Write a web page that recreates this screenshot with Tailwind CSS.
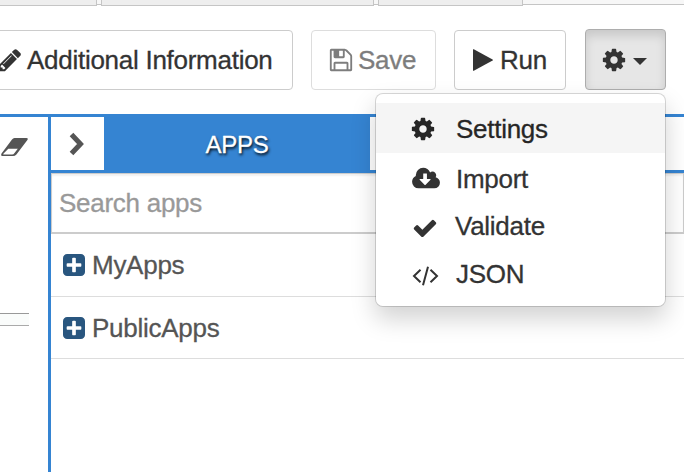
<!DOCTYPE html>
<html lang="en">
<head>
<meta charset="utf-8">
<title>Apps</title>
<script src="https://cdn.jsdelivr.net/npm/@tailwindcss/browser@4"></script>
</head>
<body class="relative h-[472px] w-[684px] overflow-hidden bg-white font-['Liberation_Sans',Arial,sans-serif] text-[26px] leading-[36px] tracking-[-0.27px] text-[#333] [-webkit-text-stroke:0.3px_currentColor]">
<svg class="hidden">
  <symbol id="cog" viewBox="0 0 1792 1792"><path d="M1152 896q0-106-75-181t-181-75-181 75-75 181 75 181 181 75 181-75 75-181zm512-109v222q0 12-8 23t-20 13l-185 28q-19 54-39 91 35 50 107 138 10 12 10 25t-9 23q-27 37-99 108t-94 71q-12 0-26-9l-138-108q-44 23-91 38-16 136-29 186-7 28-36 28h-222q-14 0-24.5-8.5t-11.5-21.5l-28-184q-49-16-90-37l-141 107q-10 9-25 9-14 0-25-11-126-114-165-168-7-10-7-23 0-12 8-23 15-21 51-66.5t54-70.5q-27-50-41-99l-183-27q-13-2-21-12.5t-8-23.5v-222q0-12 8-23t19-13l186-28q14-46 39-92-40-57-107-138-10-12-10-24 0-10 9-23 26-36 98.5-107.5t94.5-71.5q13 0 26 10l138 107q44-23 91-38 16-136 29-186 7-28 36-28h222q14 0 24.5 8.5t11.5 21.5l28 184q49 16 90 37l142-107q9-9 24-9 13 0 25 10 129 119 165 170 7 8 7 22 0 12-8 23-15 21-51 66.5t-54 70.5q26 50 41 98l183 28q13 2 21 12.5t8 23.5z"/></symbol>
  <symbol id="plus" viewBox="128 128 1536 1536"><path d="M1408 960v-128q0-26-19-45t-45-19h-320v-320q0-26-19-45t-45-19h-128q-26 0-45 19t-19 45v320h-320q-26 0-45 19t-19 45v128q0 26 19 45t45 19h320v320q0 26 19 45t45 19h128q26 0 45-19t19-45v-320h320q26 0 45-19t19-45zm256-544v960q0 119-84.5 203.5t-203.5 84.5h-960q-119 0-203.5-84.5t-84.5-203.5v-960q0-119 84.5-203.5t203.5-84.5h960q119 0 203.5 84.5t84.5 203.5z"/></symbol>
</svg>

<!-- Tab strip -->
<div class="flex h-[6px] items-start">
  <div class="h-[6px] w-[97px] border-r border-b border-[#c5c5c5] bg-[#eee]"></div>
  <div class="h-[5px] w-[4px] border-b border-[#c5c5c5] bg-[#f7f7f7]"></div>
  <div class="h-[6px] w-[273px] border-x border-b border-[#c5c5c5] bg-[#eee]"></div>
  <div class="h-[5px] w-[4px] border-b border-[#c5c5c5] bg-[#f7f7f7]"></div>
  <div class="h-[6px] w-[145px] border-x border-b border-[#c5c5c5] bg-[#eee]"></div>
  <div class="h-[5px] flex-1 border-b border-[#c5c5c5] bg-[#f7f7f7]"></div>
</div>

<!-- Toolbar -->
<div class="flex h-[108px] items-start pt-[23px]">
  <button class="mt-px -ml-[20px] flex h-[60px] w-[313px] items-center rounded-[4px] border border-[#ccc] bg-white pl-[16px]">
    <svg class="h-[26px] w-[26px] shrink-0" viewBox="0 0 1792 1792" fill="#333"><path d="M491 1536l91-91-235-235-91 91v107h128v128h107zm523-928q0-22-22-22-10 0-17 7l-542 542q-7 7-7 17 0 22 22 22 10 0 17-7l542-542q7-7 7-17zm-54-192l416 416-832 832h-416v-416zm683 96q0 53-37 90l-166 166-416-416 166-165q36-38 90-38 53 0 91 38l235 234q37 39 37 91z"/></svg>
    <span class="ml-[4px] whitespace-nowrap">Additional Information</span>
  </button>
  <button class="mt-px ml-[18px] flex h-[60px] w-[125px] items-center rounded-[4px] border border-[#ddd] bg-white pl-[16px] text-[#7d7d7d]">
    <svg class="h-[26px] w-[26px] shrink-0" viewBox="0 0 1792 1792" fill="#7d7d7d"><path d="M512 1536h768v-384h-768v384zm896 0h128v-896q0-14-10-38.5t-20-34.5l-281-281q-10-10-34-20t-39-10v416q0 40-28 68t-68 28h-576q-40 0-68-28t-28-68v-416h-128v1280h128v-416q0-40 28-68t68-28h832q40 0 68 28t28 68v416zm-384-928v-320q0-13-9.5-22.5t-22.5-9.5h-192q-13 0-22.5 9.5t-9.5 22.5v320q0 13 9.5 22.5t22.5 9.5h192q13 0 22.5-9.5t9.5-22.5zm640 32v928q0 40-28 68t-68 28h-1344q-40 0-68-28t-28-68v-1344q0-40 28-68t68-28h928q40 0 88 20t76 48l280 280q28 28 48 76t20 88z"/></svg>
    <span class="ml-[4px]">Save</span>
  </button>
  <button class="mt-px ml-[18px] flex h-[60px] w-[112px] items-center rounded-[4px] border border-[#ccc] bg-white pl-[18px]">
    <svg class="h-[22px] w-[20px] shrink-0" viewBox="0 0 20 22" fill="#333"><path d="M0 .5Q0 0 .8.3L19.6 10.5Q20.2 11 19.6 11.5L.8 21.7Q0 22 0 21.5Z"/></svg>
    <span class="ml-[7px]">Run</span>
  </button>
  <button class="ml-[19px] flex h-[61px] w-[81px] items-center rounded-[4px] border border-[#adadad] bg-[#e6e6e6] pl-[15px] shadow-[inset_0_6px_10px_rgba(0,0,0,0.125)]">
    <svg class="h-[26px] w-[26px] shrink-0" fill="#333"><use href="#cog"/></svg>
    <svg class="mt-[3px] ml-[6px] h-[7px] w-[14px]" viewBox="0 0 14 7" fill="#333"><path d="M0 0h14L7 7z"/></svg>
  </button>
</div>

<!-- Panels -->
<div class="flex h-[358px] border-t-[3px] border-[#3584d2]">
  <div class="flex w-[48px] flex-col items-start pt-[20px]">
    <svg class="h-[20px] w-[29px]" viewBox="0 0 29 20"><path d="M14.5 1H26.5Q28.5 1 27.4 3L16.4 17.5Q15 19 13 19H2Q.3 18.500 1.500 16.500L12 2.500Q13 1 14.500 1Z" fill="#555"/><path d="M8.300 11.700H17.800L14.500 16Q13.500 17.500 12 17.500H3.600Q2.600 17.500 3.600 16.500Z" fill="#fff"/></svg>
    <div class="mt-[156px] h-[13px] w-[29px] border-t border-b border-t-[#999] border-b-[#aaa] bg-[#fafcfb]"></div>
  </div>
  <div class="flex flex-1 flex-col border-l-[3px] border-[#3584d2]">
    <div class="flex h-[56px] shrink-0 border-b-[3px] border-[#3584d2] bg-[#3584d2]">
      <div class="flex w-[53px] items-center justify-center bg-white">
        <svg class="h-[24px] w-[20px]" viewBox="0 0 20 24" fill="none" stroke="#555" stroke-width="5"><path d="M3.500 2.500L12.500 12L3.500 21.500"/></svg>
      </div>
      <div class="w-[266px] pt-[10px] text-center text-[24px] text-white [text-shadow:1px_2px_3px_#000]">APPS</div>
      <div class="flex-1 bg-white"></div>
    </div>
    <div class="h-[61px] shrink-0 border border-b-2 border-[#ccc] pt-[11px] pl-[7px] text-[#999] shadow-[inset_0_2px_2px_rgba(0,0,0,0.06)]">Search apps</div>
    <div class="flex h-[63px] shrink-0 items-center border-b border-[#ddd] pl-[12px] text-[#555]">
      <svg class="h-[22px] w-[22px]" fill="#29567f"><use href="#plus"/></svg>
      <span class="ml-[7px]">MyApps</span>
    </div>
    <div class="flex h-[62px] shrink-0 items-center border-b border-[#ddd] pl-[12px] text-[#555]">
      <svg class="h-[22px] w-[22px]" fill="#29567f"><use href="#plus"/></svg>
      <span class="ml-[7px]">PublicApps</span>
    </div>
  </div>
</div>

<!-- Settings menu -->
<div class="absolute top-[93px] left-[375px] h-[214px] w-[291px] rounded-[8px] border border-black/15 bg-white bg-clip-padding pt-[9px] shadow-[0_12px_24px_rgba(0,0,0,0.175)]">
  <div class="flex h-[50px] items-center bg-[#f5f5f5] pt-[2px] pl-[34px] text-[#262626]">
    <svg class="h-[26px] w-[26px]" fill="#262626"><use href="#cog"/></svg>
    <span class="ml-[20px]">Settings</span>
  </div>
  <div class="flex h-[50px] items-center pt-[2px] pl-[36px]">
    <svg class="h-[26px] w-[28px]" viewBox="-64 0 1920 1792" fill="#333"><path d="M1216 928q0-14-9-23t-23-9h-224v-352q0-13-9.500-22.500t-22.500-9.500h-192q-13 0-22.500 9.500t-9.500 22.500v352h-224q-13 0-22.500 9.500t-9.500 22.500q0 14 9 23l352 352q9 9 23 9t23-9l351-351q10-12 10-24zm640 224q0 159-112.500 271.500t-271.500 112.500h-1088q-185 0-316.500-131.500t-131.500-316.500q0-130 70-240t188-165q-2-30-2-43 0-212 150-362t362-150q156 0 285.500 87t188.500 231q71-62 166-62 106 0 181 75t75 181q0 76-41 138 130 31 213.500 135.500t83.500 238.500z"/></svg>
    <span class="ml-[16px]">Import</span>
  </div>
  <div class="flex h-[46px] items-center pl-[36px]">
    <svg class="mt-[3px] h-[26px] w-[26px]" viewBox="0 0 1792 1792" fill="#333"><path d="M1671 566q0 40-28 68l-724 724-136 136q-28 28-68 28t-68-28l-136-136-362-362q-28-28-28-68t28-68l136-136q28-28 68-28t68 28l294 295 656-657q28-28 68-28t68 28l136 136q28 28 28 68z"/></svg>
    <span class="ml-[17px]">Validate</span>
  </div>
  <div class="flex h-[48px] items-center pt-[2px] pl-[36px]">
    <svg class="mt-[4px] h-[20px] w-[27px]" viewBox="0 0 27 20" fill="none" stroke="#333" stroke-width="2"><path d="M8.500 3.700L2 10L8.500 16.300M18.500 3.700L25 10L18.500 16.300M16 .8L11 19.200"/></svg>
    <span class="ml-[17px]">JSON</span>
  </div>
</div>
</body>
</html>
